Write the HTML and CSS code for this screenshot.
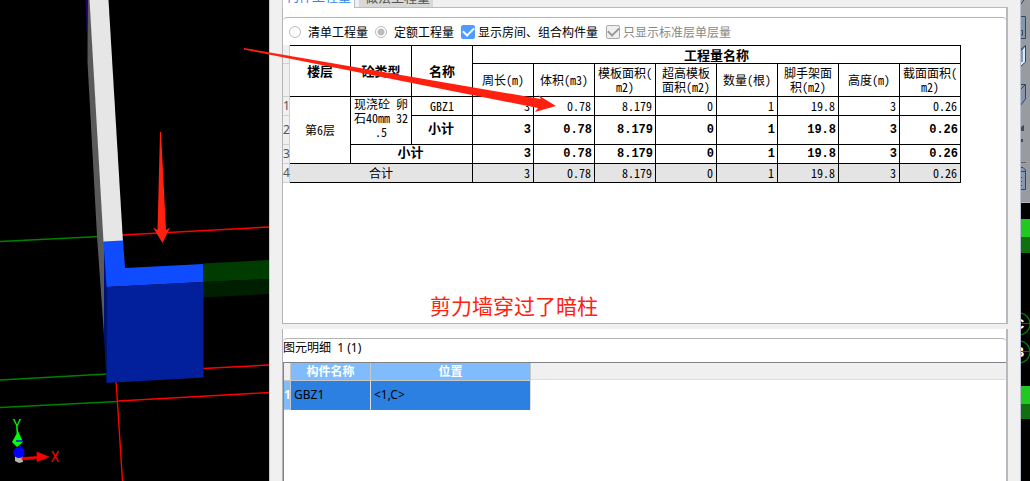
FILE: index.html
```html
<!DOCTYPE html>
<html lang="zh-CN">
<head>
<meta charset="utf-8">
<title>构件工程量</title>
<link rel="stylesheet" href="styles.css">
</head>
<body>
<div class="app">
  <div class="scene">
    <svg class="scene-art" width="269" height="481" viewBox="0 0 269 481">
      <g stroke-width="1.4" fill="none">
        <path d="M0 241.500L100 236.500M0 380L107 374M0 407.500L118 401.500" stroke="#008000"/>
        <path d="M122 235L269 227M203 368.500L269 365M118 401L269 392.500M116 380L122.500 481" stroke="#f00"/>
      </g>
      <path d="M85.500 0H88V61z" fill="#1c0070"/>
      <path d="M88 0H90L104 241V335L97 236L87.500 62z" fill="#5a5a5a"/>
      <path d="M89.500 0H108.500L123 242H103.500z" fill="#e6e6e6"/>
      <path d="M203 263.500L269 260V279L203 282z" fill="#003c00"/>
      <path d="M203 282L269 279V294L203 297.500z" fill="#001e00"/>
      <path d="M104 241L106.500 286V383L104 336z" fill="#00127a"/>
      <path d="M103.500 241.500L123 240.500L125 268L203 264V282L106.500 287z" fill="#104cff"/>
      <path d="M106.500 287L203.500 282V377.500L106.500 383z" fill="#02209c"/>
      <path d="M160 132H161L166 230L170 227.500L162.500 243L153 227.500L157.500 230z" fill="#ff2010"/>
      <path d="M15 456H23V462L19 463L15 461z" fill="#b4b4b4"/>
      <path d="M22 457.500L37 456.500V452L49 457L37 461.500V458.500L22 460z" fill="#f00" stroke="#f00" stroke-width=".6"/>
      <path d="M16.500 430V434L12 442L17 447L23 442L18 431V430z" fill="#0f0"/>
      <text class="axis" x="17" y="430" fill="#0f0">Y</text>
      <text class="axis" x="55" y="462" fill="#f00">X</text>
      <path d="M16 441H23M20 445V449" stroke="#00f" stroke-width="1.500"/>
      <circle cx="19" cy="452.500" r="5.500" fill="#00f"/>
    </svg>
  </div>

  <main class="dialog">
    <div class="tabs">
      <button class="tab tab-active" type="button">构件工程量</button>
      <button class="tab" type="button">做法工程量</button>
    </div>
    <section class="panel quantity">
      <div class="options">
        <label class="option"><input class="radio" type="radio" name="kind">清单工程量</label>
        <label class="option"><input class="radio" type="radio" name="kind" checked>定额工程量</label>
        <label class="option"><input class="check" type="checkbox" checked>显示房间、组合构件量</label>
        <label class="option option-off"><input class="check" type="checkbox" checked disabled>只显示标准层单层量</label>
      </div>
      <table class="grid">
        <colgroup><col class="col-num"><col span="11" class="col-data"></colgroup>
        <thead>
          <tr class="row-title"><th class="num"></th><th rowspan="2">楼层</th><th rowspan="2">砼类型</th><th rowspan="2">名称</th><th colspan="8">工程量名称</th></tr>
          <tr class="row-names"><th class="num"></th><th>周长(m)</th><th>体积(m3)</th><th>模板面积(<br>m2)</th><th>超高模板<br>面积(m2)</th><th>数量(根)</th><th>脚手架面<br>积(m2)</th><th>高度(m)</th><th>截面面积(<br>m2)</th></tr>
        </thead>
        <tbody>
          <tr class="row"><th class="num">1</th><td class="mid" rowspan="3">第6层</td><td class="mid top" rowspan="2">现浇砼 卵<br>石40mm 32<br>.5</td><td class="mid">GBZ1</td><td>3</td><td>0.78</td><td>8.179</td><td>0</td><td>1</td><td>19.8</td><td>3</td><td>0.26</td></tr>
          <tr class="row-tall strong"><th class="num">2</th><td class="mid">小计</td><td>3</td><td>0.78</td><td>8.179</td><td>0</td><td>1</td><td>19.8</td><td>3</td><td>0.26</td></tr>
          <tr class="row strong"><th class="num">3</th><td class="mid" colspan="2">小计</td><td>3</td><td>0.78</td><td>8.179</td><td>0</td><td>1</td><td>19.8</td><td>3</td><td>0.26</td></tr>
          <tr class="row total"><th class="num">4</th><td class="mid" colspan="3">合计</td><td>3</td><td>0.78</td><td>8.179</td><td>0</td><td>1</td><td>19.8</td><td>3</td><td>0.26</td></tr>
        </tbody>
      </table>
      <p class="note">剪力墙穿过了暗柱</p>
    </section>
    <section class="panel detail">
      <h2 class="detail-title">图元明细&nbsp; 1 (1)</h2>
      <div class="list-area">
        <table class="list">
          <colgroup><col class="col-num"><col class="col-name"><col class="col-place"></colgroup>
          <thead><tr><th class="corner"></th><th>构件名称</th><th>位置</th></tr></thead>
          <tbody><tr><th class="list-num">1</th><td>GBZ1</td><td>&lt;1,C&gt;</td></tr></tbody>
        </table>
      </div>
    </section>
  </main>

  <div class="side">
    <svg class="side-art" width="9" height="481" viewBox="0 0 9 481">
      <path d="M0 0H9V202H0z" fill="#989ba0"/>
      <g stroke="#34465e" fill="#8597ad">
        <path d="M0 4L3 0" />
        <path d="M-1 16.500H4.500V38.500H-1z"/>
        <path d="M-1 30.500H1.500V35H-1" fill="none"/>
        <path d="M-1 50L4.500 45.500V62L-1 67z" fill="#d5ebff"/>
        <path d="M-1 47L1 51V62M1 50L4 46" fill="none"/>
        <path d="M-1 84.500H4.500V99L-1 106z"/>
        <path d="M-1 90L4 85" />
        <path d="M-1 167.500H2L4.500 170V189.500H-1z"/>
        <path d="M0 171.500H4M0 177.500H1M0 181.500H1M0 185.500H1"/>
      </g>
      <path d="M0 127L3 125V131H0zM0 139H2V142H0z" fill="#414b5a"/>
      <path d="M0 162.500H5" stroke="#666"/>
      <path d="M0 202.500H9" stroke="#b3b5bc"/>
      <path d="M0 219H9V237H0zM0 386H9V404H0z" fill="#20c820"/>
      <path d="M0 237H9V253H0zM0 404H9V419H0z" fill="#107010"/>
      <g fill="none" stroke="#008000" stroke-width="1.200">
        <circle cx="-2" cy="324" r="11"/><circle cx="-2" cy="352" r="11"/>
      </g>
      <text class="axis-mark" x="-2" y="329">C</text>
      <text class="axis-mark" x="-2" y="357">B</text>
      <path d="M0 323.500H9M0 351.500H9" stroke="#e00000"/>
    </svg>
  </div>
  <svg class="pointer" width="314" height="66" viewBox="0 0 314 66">
    <path d="M0 0V1.500L208 43L294 60L291 64L312 58L294 47L297 51z" fill="#ff2010"/>
  </svg>
</div>
</body>
</html>
```
FILE: styles.css
```css
* { box-sizing: border-box; }
body { margin: 0; font: 12px/16px "Noto Sans", "Noto Sans CJK SC", sans-serif; color: #000; background: #000; }
.app { position: relative; display: flex; height: 100vh; overflow: hidden; }
.scene { flex: none; background: #000; }
.scene-art, .side-art { display: block; }
.axis { font: 15px "Noto Sans CJK SC", sans-serif; text-anchor: middle; }
.axis-mark { font: bold 15px "Liberation Sans", sans-serif; fill: #fff; text-anchor: middle; }
.side { flex: none; background: #000; }
.pointer { position: absolute; left: 244px; top: 48px; }

.dialog { flex: 1; min-width: 0; display: flex; flex-direction: column; background: #f0f0f0; border-left: 1px solid #c8ccd4; border-right: 1px solid #b9c0d2; padding: 0 12px; }
.tabs { flex: none; display: flex; align-items: flex-end; height: 8px; gap: 4px; border-bottom: 1px solid #b9bbc0; border-left: 1px solid #c4c4c8; }
.tab { height: 20px; border: 0; padding: 0 3px 0 6px; font: 13px/16px "Noto Sans CJK SC", sans-serif; background: #d8d8d8; color: #555; }
.tab-active { width: 72px; height: 22px; margin-bottom: -1px; padding: 0 0 2px; background: #fff; color: #2f86e6; border-right: 1px solid #b9bbc0; }

.panel { background: #fff; border-left: 1px solid #b4b4b8; border-right: 2px solid #b8b9bf; }
.quantity { flex: none; display: flex; flex-direction: column; height: 316px; padding-top: 9px; border-bottom: 1px solid #b4b4b4; }
.options { display: flex; align-items: center; height: 28px; padding: 0 6px; border-top: 1px solid #b4b4b4; border-radius: 4px 4px 0 0; font-family: "Noto Sans CJK SC", sans-serif; }
.option { display: flex; align-items: center; gap: 3px; margin-right: 7px; white-space: nowrap; }
.option-off { margin-left: 1px; color: #888; }
.radio, .check { appearance: none; margin: 0; flex: none; }
.radio { width: 12px; height: 12px; margin-right: 4px; border: 1px solid #bbb; border-radius: 50%; }
.radio:checked { background: radial-gradient(circle, #bbb 0 3px, #fff 4px); }
.check { width: 14px; height: 14px; border: 1px solid #4c9dff; border-radius: 2px; background: #4c9dff; display: grid; place-items: center; }
.check::before { content: ""; width: 9px; height: 5px; border: solid #fff; border-width: 0 0 2px 2px; rotate: -45deg; margin-bottom: 3px; }
.check:disabled { background: #f0f0f0; border-color: #aaa; }
.check:disabled::before { border-color: #999; }

.grid { width: 678px; table-layout: fixed; border-collapse: separate; border-spacing: 0; font: 12px/14px "Noto Sans CJK SC", sans-serif; font-feature-settings: "hwid"; }
.col-num { width: 7px; }
.col-data { width: 61px; }
.grid th, .grid td { padding: 0; border: solid #000; border-width: 0 1px 1px 0; white-space: nowrap; }
.grid td { text-align: right; padding-right: 3px; }
.grid .mid { text-align: center; padding: 0; }
.grid .top { vertical-align: top; }
.row-title { height: 19px; font-size: 13px; }
.row-title th:not(.num) { border-top-width: 1px; }
.row-names { height: 33px; }
.row-names th { font-weight: 400; }
.row { height: 19px; }
.row-tall { height: 29px; }
.grid .strong td { padding-right: 2px; }
.strong { font-family: "Liberation Mono", "Noto Sans CJK SC", monospace; font-weight: 700; }
.strong .mid { font-size: 13px; }
.total td { background: #e4e4e4; }
.grid .num { background: #f0f0f0; border-color: #d0d0d0; color: #555; font: 12px/14px "Noto Sans", sans-serif; }
.note { margin: 108px 0 0 147px; font: 21px/28px "Noto Sans CJK SC", sans-serif; color: #ff2010; }

.detail { flex: 1; min-height: 0; margin-top: 5px; padding-top: 9px; display: flex; flex-direction: column; }
.detail-title { margin: 0; height: 24px; border-top: 1px solid #b4b4b4; border-radius: 4px 4px 0 0; font: 12px/18px "Noto Sans", "Noto Sans CJK SC", sans-serif; }
.list-area { flex: 1; border-top: 1px solid #808388; border-left: 1px solid #808388; background: linear-gradient(#f0f0f0 0 16px, #ddd 16px 17px, #fff 17px); }
.list { width: 247px; table-layout: fixed; border-collapse: separate; border-spacing: 0; }
.col-name { width: 80px; }
.col-place { width: 160px; }
.list th { height: 18px; padding: 0; background: #80bbfb; color: #fff; border: solid #c8c8c8; border-width: 0 1px 1px 0; line-height: 16px; }
.list .corner { background: #f0f0f0; }
.list td { height: 29px; padding: 0 3px 2px; background: #2b80e2; border-right: 1px solid #ddd; }
```
